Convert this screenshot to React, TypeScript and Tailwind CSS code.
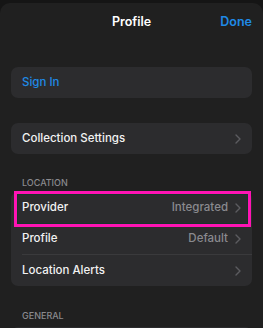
import React from "react";

const Chevron = () => (
  <svg width="6" height="10" viewBox="0 0 6 10" className="shrink-0">
    <path d="M1 1l4 4-4 4" fill="none" stroke="#5c5c60" strokeWidth="1.4" strokeLinecap="round" strokeLinejoin="round" />
  </svg>
);

function Row({ label, value, chevron = true, blue = false, className = "" }: { label: string; value?: string; chevron?: boolean; blue?: boolean; className?: string }) {
  return (
    <div className={"flex items-center h-[31px] pl-[11px] pr-[11px] " + className}>
      <span className={"text-[11.5px] font-medium " + (blue ? "text-[#1f8ae6]" : "text-[#f2f2f2]")}>{label}</span>
      <div className="flex-1" />
      {value && <span className="text-[11.5px] font-medium text-[#8a8a8e] mr-[7px]">{value}</span>}
      {chevron && <Chevron />}
    </div>
  );
}

export default function App() {
  return (
    <div className="w-[263px] h-[328px] bg-[#151515] overflow-hidden" style={{ fontFamily: "Inter, 'Noto Sans', sans-serif" }}>
      <div className="mt-[3px] h-[325px] bg-[#202020] rounded-t-[10px] px-[11px]">
        <div className="relative flex items-center justify-center h-[38px]">
          <span className="text-[12.5px] font-semibold text-white">Profile</span>
          <span className="absolute right-0 text-[12.5px] font-semibold text-[#1f8ae6]">Done</span>
        </div>
        <div className="h-[26px]" />
        <div className="bg-[#2c2c2e] rounded-[7px]">
          <Row label="Sign In" blue chevron={false} className="h-[30px]" />
        </div>
        <div className="h-[25px]" />
        <div className="bg-[#2c2c2e] rounded-[7px]">
          <Row label="Collection Settings" className="h-[30px]" />
        </div>
        <div className="pl-[11px] pt-[24px] pb-[4px] text-[9px] font-medium text-[#8a8a8e] leading-[10px]">LOCATION</div>
        <div className="bg-[#2c2c2e] rounded-[7px]">
          <div className="relative">
            <Row label="Provider" value="Integrated" className="h-[31px]" />
            <div className="absolute left-[3px] right-[1px] top-[-1px] bottom-[-4px] border-[3px] border-[#ff14b4] shadow-[inset_0_0_0_1px_#16352a]" />
          </div>
          <Row label="Profile" value="Default" className="h-[31px]" />
          <div className="ml-[11px] h-px bg-[#3a3a3c]" />
          <Row label="Location Alerts" className="h-[31px]" />
        </div>
        <div className="pl-[11px] pt-[25px] pb-[6px] text-[9px] font-medium text-[#8a8a8e] leading-[10px]">GENERAL</div>
        <div className="bg-[#2c2c2e] rounded-[7px] h-[30px]" />
      </div>
    </div>
  );
}
